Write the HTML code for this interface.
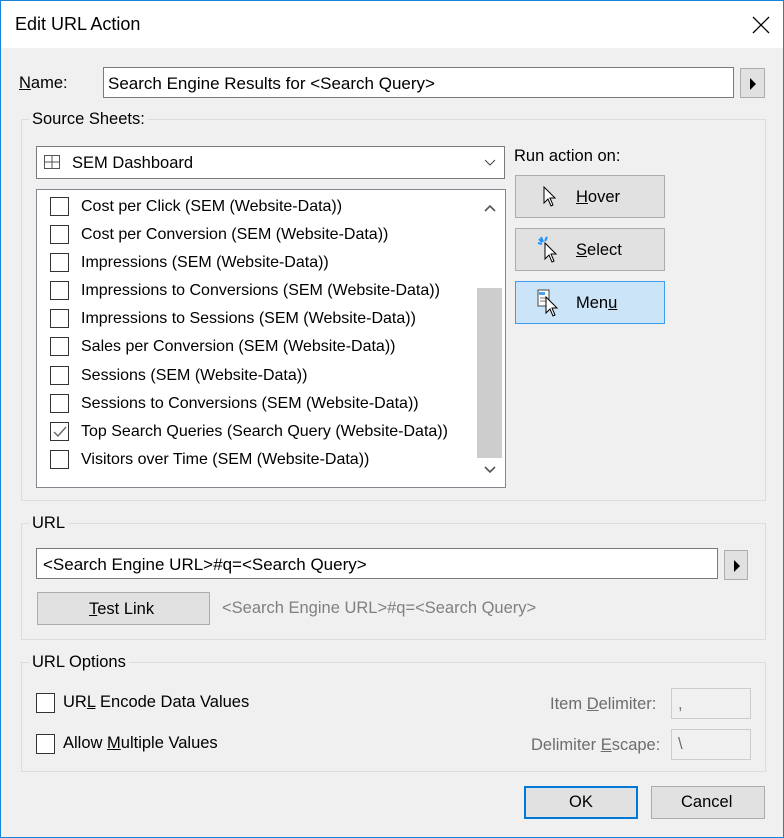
<!DOCTYPE html>
<html><head><style>
*{box-sizing:border-box;margin:0;padding:0}
body{width:784px;height:838px;overflow:hidden;font-family:"Liberation Sans",sans-serif;font-size:16.5px;color:#000;background:#f0f0f0;position:relative}
.win{position:absolute;left:0;top:0;width:784px;height:838px;border:1px solid #1883d7;background:#f0f0f0}
.a{position:absolute}
.title{position:absolute;left:0;top:0;width:782px;height:47px;background:#fff}
.grp{position:absolute;border:1px solid #dcdcdc}
.lbl{position:absolute;background:#f0f0f0;padding:0 3px}
.inp{position:absolute;background:#fff;border:1px solid #7a7a7a}
.btn{position:absolute;background:#e1e1e1;border:1px solid #adadad}
.cb{position:absolute;width:19px;height:19px;border:1px solid #333;background:#fff}
.row{position:absolute;left:49px;height:28px}
.row .cb{left:0;top:0}
.row span{position:absolute;left:31px;top:0;white-space:nowrap;line-height:19px;font-size:16px}
u{text-decoration:underline}
.gray{color:#6d6d6d}
</style></head><body>
<div class="win">
<div class="title"></div>
<div class="a" style="left:14px;top:13px;font-size:18px">Edit URL Action</div>
<svg class="a" style="left:751px;top:15px" width="18" height="18"><path d="M1 1L17 17M17 1L1 17" stroke="#000" stroke-width="1.3"/></svg>

<div class="a" style="left:18px;top:73px"><u>N</u>ame:</div>
<div class="inp" style="left:102px;top:66px;width:631px;height:31px"><span class="a" style="left:4px;top:6px;font-size:17px">Search Engine Results for &lt;Search Query&gt;</span></div>
<div class="btn" style="left:739px;top:67px;width:25px;height:30px"><svg class="a" style="left:8px;top:9px" width="8" height="12"><path d="M1 0L7 6L1 12Z" fill="#000"/></svg></div>

<div class="grp" style="left:20px;top:118px;width:745px;height:382px"></div>
<div class="lbl" style="left:28px;top:109px">Source Sheets:</div>
<div class="inp" style="left:35px;top:145px;width:469px;height:33px">
<svg class="a" style="left:7px;top:8px" width="16" height="14"><rect x="0.5" y="0.5" width="15" height="13" fill="none" stroke="#555"/><path d="M8 0V14M0 7H16" stroke="#555"/></svg>
<span class="a" style="left:35px;top:7px">SEM Dashboard</span>
<svg class="a" style="left:447px;top:12px" width="12" height="8"><path d="M1 1L6 6L11 1" fill="none" stroke="#444"/></svg></div>
<div class="a" style="left:513px;top:146px">Run action on:</div>

<div class="inp" style="left:35px;top:188px;width:470px;height:299px;border-color:#828790">
<div class="a" style="left:440px;top:98px;width:25px;height:170px;background:#cdcdcd"></div>
<svg class="a" style="left:447px;top:14px" width="12" height="8"><path d="M1 7L6 2L11 7" fill="none" stroke="#555" stroke-width="1.6"/></svg>
<svg class="a" style="left:447px;top:276px" width="12" height="8"><path d="M1 1L6 6L11 1" fill="none" stroke="#555" stroke-width="1.6"/></svg>
</div>
<div class="row" style="top:196px"><div class="cb"></div><span>Cost per Click (SEM (Website-Data))</span></div>
<div class="row" style="top:224px"><div class="cb"></div><span>Cost per Conversion (SEM (Website-Data))</span></div>
<div class="row" style="top:252px"><div class="cb"></div><span>Impressions (SEM (Website-Data))</span></div>
<div class="row" style="top:280px"><div class="cb"></div><span>Impressions to Conversions (SEM (Website-Data))</span></div>
<div class="row" style="top:308px"><div class="cb"></div><span>Impressions to Sessions (SEM (Website-Data))</span></div>
<div class="row" style="top:336px"><div class="cb"></div><span>Sales per Conversion (SEM (Website-Data))</span></div>
<div class="row" style="top:365px"><div class="cb"></div><span>Sessions (SEM (Website-Data))</span></div>
<div class="row" style="top:393px"><div class="cb"></div><span>Sessions to Conversions (SEM (Website-Data))</span></div>
<div class="row" style="top:421px"><div class="cb"><svg class="a" style="left:2px;top:3px" width="14" height="12"><path d="M1 6L5 10L13 1" fill="none" stroke="#666" stroke-width="1.4"/></svg></div><span>Top Search Queries (Search Query (Website-Data))</span></div>
<div class="row" style="top:449px"><div class="cb"></div><span>Visitors over Time (SEM (Website-Data))</span></div>

<div class="btn" style="left:514px;top:174px;width:150px;height:43px">
<svg class="a" style="left:26px;top:10px" width="16" height="22"><path d="M2 1V17L6 13L9 20L11 19L8 12H13Z" fill="#fff" stroke="#000"/></svg>
<span class="a" style="left:60px;top:12px"><u>H</u>over</span></div>
<div class="btn" style="left:514px;top:227px;width:150px;height:43px">
<svg class="a" style="left:20px;top:6px" width="24" height="28"><path d="M5 2L7 7M2 8L6 9M11 2L9 6M3 4L6 7" stroke="#1e90ff" stroke-width="2"/><path d="M9 8V24L13 20L16 27L18 26L15 19H20Z" fill="#fff" stroke="#000"/></svg>
<span class="a" style="left:60px;top:12px"><u>S</u>elect</span></div>
<div class="btn" style="left:514px;top:280px;width:150px;height:43px;background:#cce4f7;border-color:#3c9cf0">
<svg class="a" style="left:21px;top:7px" width="24" height="28"><rect x="1" y="1" width="11" height="16" fill="#fff" stroke="#444"/><rect x="2" y="3" width="6" height="3" fill="#4aa3f0"/><path d="M3 9H9M3 12H9" stroke="#777"/><path d="M9 8V24L13 20L16 27L18 26L15 19H20Z" fill="#fff" stroke="#000"/></svg>
<span class="a" style="left:60px;top:12px">Men<u>u</u></span></div>

<div class="grp" style="left:20px;top:522px;width:745px;height:117px"></div>
<div class="lbl" style="left:28px;top:513px">URL</div>
<div class="inp" style="left:35px;top:547px;width:682px;height:31px"><span class="a" style="left:6px;top:6px;font-size:17px">&lt;Search Engine URL&gt;#q=&lt;Search Query&gt;</span></div>
<div class="btn" style="left:723px;top:549px;width:24px;height:30px"><svg class="a" style="left:8px;top:9px" width="8" height="12"><path d="M1 0L7 6L1 12Z" fill="#000"/></svg></div>
<div class="btn" style="left:36px;top:591px;width:173px;height:33px"><span class="a" style="left:51px;top:7px"><u>T</u>est Link</span></div>
<div class="a" style="left:221px;top:598px;color:#808080">&lt;Search Engine URL&gt;#q=&lt;Search Query&gt;</div>

<div class="grp" style="left:20px;top:661px;width:745px;height:110px"></div>
<div class="lbl" style="left:28px;top:652px">URL Options</div>
<div class="cb" style="left:35px;top:692px;height:20px"></div>
<div class="a" style="left:62px;top:692px">UR<u>L</u> Encode Data Values</div>
<div class="cb" style="left:35px;top:733px;height:20px"></div>
<div class="a" style="left:62px;top:733px">Allow <u>M</u>ultiple Values</div>
<div class="a gray" style="left:549px;top:694px">Item <u>D</u>elimiter:</div>
<div class="a gray" style="left:530px;top:735px">Delimiter <u>E</u>scape:</div>
<div class="a" style="left:670px;top:687px;width:80px;height:31px;border:1px solid #ccc;background:#f0f0f0"><span class="a gray" style="left:6px;top:6px">,</span></div>
<div class="a" style="left:670px;top:728px;width:80px;height:31px;border:1px solid #ccc;background:#f0f0f0"><span class="a gray" style="left:6px;top:5px">\</span></div>

<div class="btn" style="left:523px;top:785px;width:114px;height:33px;border:2px solid #0078d7"><span class="a" style="left:43px;top:5px">OK</span></div>
<div class="btn" style="left:650px;top:785px;width:114px;height:33px"><span class="a" style="left:29px;top:6px">Cancel</span></div>
</div>
</body></html>
